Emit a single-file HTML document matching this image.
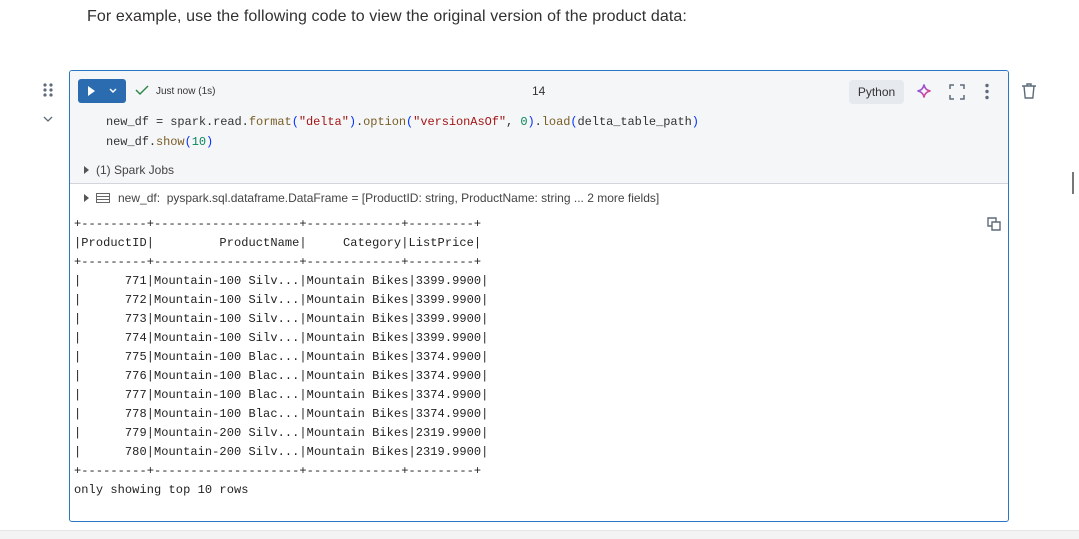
<!DOCTYPE html>
<html><head><style>
body{margin:0;width:1079px;height:538px;background:#fff;position:relative;overflow:hidden;font-family:"Liberation Sans",sans-serif;}
.p{position:absolute;left:87px;top:8px;font-size:16px;color:#323130;letter-spacing:0.1px;}
.cell{position:absolute;left:69px;top:70px;width:938px;height:450px;border:1px solid #2a78c2;border-radius:3px;overflow:hidden;}
.top{position:absolute;left:0;top:0;width:938px;height:112px;background:#f5f6f8;border-bottom:1px solid #d1d5db;}
.run{position:absolute;left:8px;top:8px;width:48px;height:24px;background:#2b6cb0;border-radius:3px;}
.mono{font-family:"Liberation Mono",monospace;font-size:12px;}
.code{position:absolute;left:36px;top:41px;line-height:20px;color:#333;white-space:pre;letter-spacing:-0.06px;}
.s{color:#a31515}.f{color:#795e26}.n{color:#098658}.b{color:#0431fa}
.out{position:absolute;left:4px;top:124px;line-height:19px;color:#222;white-space:pre;letter-spacing:0.07px;}
.sm{font-size:12px;color:#444;position:absolute;}
.tri{display:inline-block;width:0;height:0;border-left:5px solid #555;border-top:4px solid transparent;border-bottom:4px solid transparent;margin-right:7px;}
</style></head><body>
<div class="p">For example, use the following code to view the original version of the product data:</div>
<div style="position:absolute;left:0;top:530px;width:1079px;height:8px;background:#f3f3f3;border-top:1px solid #e5e5e5"></div>
<div style="position:absolute;left:1072px;top:172px;width:2px;height:22px;background:#777"></div>
<svg style="position:absolute;left:43px;top:83px" width="12" height="14"><g fill="#5f6b7a"><circle cx="2" cy="2" r="1.6"/><circle cx="8" cy="2" r="1.6"/><circle cx="2" cy="7" r="1.6"/><circle cx="8" cy="7" r="1.6"/><circle cx="2" cy="12" r="1.6"/><circle cx="8" cy="12" r="1.6"/></g></svg>
<svg style="position:absolute;left:43px;top:115px" width="10" height="8"><path d="M1 2l4 4 4-4" fill="none" stroke="#5f6b7a" stroke-width="1.3"/></svg>
<svg style="position:absolute;left:1021px;top:82px" width="16" height="18"><path d="M1 4h14M6 4V2h4v2M3 4l1.2 12h7.6L13 4" fill="none" stroke="#5f6b7a" stroke-width="1.4"/></svg>
<div class="cell">
<div class="top">
<div class="run"><svg width="48" height="24"><path d="M10 7l7 5-7 5z" fill="#fff"/><path d="M32 10l3 3 3-3" fill="none" stroke="#fff" stroke-width="1.5"/></svg></div>
<svg style="position:absolute;left:65px;top:13px" width="14" height="12"><path d="M1 6l4 4 8-8" fill="none" stroke="#2f8a4a" stroke-width="1.5"/></svg>
<div class="sm" style="left:86px;top:15px;font-size:10px;color:#333">Just now (1s)</div>
<div class="sm" style="left:462px;top:13px;font-size:12px;color:#333">14</div>
<div style="position:absolute;left:779px;top:9px;width:55px;height:24px;background:#e6e9ee;border-radius:4px;font-size:12px;color:#333;text-align:center;line-height:24px">Python</div>
<svg style="position:absolute;left:846px;top:12px" width="16" height="16"><defs><linearGradient id="g" x1="0" y1="0" x2="1" y2="1"><stop offset="0" stop-color="#6a5cff"/><stop offset="1" stop-color="#ff3d6e"/></linearGradient></defs><path d="M8 1.5C8.6 5.5 10.5 7.4 14.5 8 10.5 8.6 8.6 10.5 8 14.5 7.4 10.5 5.5 8.6 1.5 8 5.5 7.4 7.4 5.5 8 1.5z" fill="none" stroke="url(#g)" stroke-width="1.6"/></svg>
<svg style="position:absolute;left:879px;top:13px" width="16" height="16"><path d="M1 5V1h4M11 1h4v4M15 11v4h-4M5 15H1v-4" fill="none" stroke="#5f6b7a" stroke-width="1.5"/></svg>
<svg style="position:absolute;left:914px;top:12px" width="6" height="18"><g fill="#5f6b7a"><circle cx="3" cy="2.5" r="1.7"/><circle cx="3" cy="8.5" r="1.7"/><circle cx="3" cy="14.5" r="1.7"/></g></svg>
<div class="code mono">new_df = spark.read.<span class="f">format</span><span class="b">(</span><span class="s">"delta"</span><span class="b">)</span>.<span class="f">option</span><span class="b">(</span><span class="s">"versionAsOf"</span>, <span class="n">0</span><span class="b">)</span>.<span class="f">load</span><span class="b">(</span>delta_table_path<span class="b">)</span>
new_df.<span class="f">show</span><span class="b">(</span><span class="n">10</span><span class="b">)</span></div>
<div class="sm" style="left:14px;top:92px;font-size:12px"><span class="tri"></span>(1) Spark Jobs</div>
</div>
<div class="sm" style="left:14px;top:120px;font-size:12px"><span class="tri"></span><svg width="14" height="10" style="margin-right:8px;vertical-align:-1px"><rect x="0.5" y="0.5" width="13" height="9" fill="none" stroke="#666"/><path d="M1 3.5h12M1 6.5h12" stroke="#666"/></svg>new_df:&nbsp; pyspark.sql.dataframe.DataFrame = [ProductID: string, ProductName: string ... 2 more fields]</div>
<svg style="position:absolute;left:917px;top:146px" width="14" height="14"><path d="M1 1h8v8H1z" fill="none" stroke="#5f6b7a" stroke-width="1.4"/><path d="M5 5h8v8H5z" fill="#fff" stroke="#5f6b7a" stroke-width="1.4"/></svg>
<div class="out mono" style="top:144px">+---------+--------------------+-------------+---------+
|ProductID|         ProductName|     Category|ListPrice|
+---------+--------------------+-------------+---------+
|      771|Mountain-100 Silv...|Mountain Bikes|3399.9900|
|      772|Mountain-100 Silv...|Mountain Bikes|3399.9900|
|      773|Mountain-100 Silv...|Mountain Bikes|3399.9900|
|      774|Mountain-100 Silv...|Mountain Bikes|3399.9900|
|      775|Mountain-100 Blac...|Mountain Bikes|3374.9900|
|      776|Mountain-100 Blac...|Mountain Bikes|3374.9900|
|      777|Mountain-100 Blac...|Mountain Bikes|3374.9900|
|      778|Mountain-100 Blac...|Mountain Bikes|3374.9900|
|      779|Mountain-200 Silv...|Mountain Bikes|2319.9900|
|      780|Mountain-200 Silv...|Mountain Bikes|2319.9900|
+---------+--------------------+-------------+---------+
only showing top 10 rows</div>
</div>
</body></html>
